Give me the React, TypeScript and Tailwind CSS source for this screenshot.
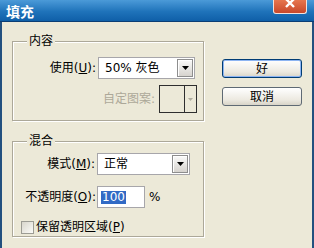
import React from 'react';

const font = "font-['DejaVu_Sans','Noto_Sans_CJK_SC',sans-serif]";

function Arrow() {
  return (
    <div className="w-[16px] h-full flex items-center justify-center border border-[#8e8e8e] bg-[linear-gradient(#fafafa,#d6d3ce)] shadow-[inset_1px_1px_0_#fff]">
      <svg width="7" height="4" viewBox="0 0 7 4">
        <path d="M0 0h7L3.5 4z" fill="#000" />
      </svg>
    </div>
  );
}

function Select({ value, width }: { value: string; width: string }) {
  return (
    <div className={`${width} h-[22px] flex items-center border border-[#a7a6aa] bg-white p-[1px]`}>
      <span className="flex-1 pl-[5px] leading-none">{value}</span>
      <Arrow />
    </div>
  );
}

function Group({ title, className, children }: { title: string; className: string; children: React.ReactNode }) {
  return (
    <div className={`relative border border-[#aca899] shadow-[inset_1px_1px_0_#fff,1px_1px_0_#fff] ${className}`}>
      <span className="absolute top-[-9px] left-[14px] bg-[#ece9d8] px-[2px] leading-[16px]">{title}</span>
      {children}
    </div>
  );
}

export default function App() {
  return (
    <div className={`w-[314px] h-[248px] overflow-hidden flex flex-col bg-[#ece9d8] text-[12px] text-black ${font}`}>
      {/* title bar */}
      <div className="h-[22px] flex items-start pl-[6px] pr-[7px] bg-[linear-gradient(to_bottom,#4b9ad8,#1f73ba_55%,#0f5fa8)] border-b border-[#0b3d74]">
        <span className="mt-[2px] text-white font-bold text-[14px] leading-[18px] font-['Noto_Sans_CJK_SC',sans-serif]">填充</span>
        <div className="ml-auto w-[34px] h-[14px] overflow-hidden rounded-b-[3px] border border-t-0 border-[#f3e2dc] bg-[linear-gradient(#e6764f,#c8482a)] flex justify-center">
          <svg width="12" height="12" viewBox="0 0 12 12" className="mt-[-3px]">
            <path d="M2 2l8 8M10 2l-8 8" stroke="#fff" strokeWidth="2.4" />
          </svg>
        </div>
      </div>

      {/* client area */}
      <div className="flex-1 flex border-x-2 border-[#23507f] pl-[10px] pt-[19px]">
        <div className="w-[192px] flex flex-col gap-[20px]">
          <Group title="内容" className="h-[80px] pt-[15px]">
            <div className="flex items-center">
              <span className="w-[83px] text-right">使用(<u>U</u>):</span>
              <div className="ml-[2px]">
                <Select value="50% 灰色" width="w-[97px]" />
              </div>
            </div>
            <div className="flex items-center justify-end mt-[6px] pr-[6px]">
              <span className="mr-[4px] text-[#aca899]">自定图案:</span>
              <div className="w-[38px] h-[28px] border border-[#2e2e2e] flex">
                <div className="w-[25px] border-r border-[#2e2e2e]" />
                <div className="flex-1 flex items-center justify-center">
                  <svg width="5" height="3" viewBox="0 0 5 3">
                    <path d="M0 0h5L2.5 3z" fill="#b0ada0" />
                  </svg>
                </div>
              </div>
            </div>
          </Group>

          <Group title="混合" className="h-[96px] pt-[11px]">
            <div className="flex items-center">
              <span className="w-[82px] text-right">模式(<u>M</u>):</span>
              <div className="ml-[2px]">
                <Select value="正常" width="w-[93px]" />
              </div>
            </div>
            <div className="flex items-center mt-[11px]">
              <span className="w-[83px] text-right">不透明度(<u>O</u>):</span>
              <div className="ml-[1px] w-[48px] h-[22px] border border-[#a7a6aa] bg-white flex items-center pl-[3px]">
                <span className="bg-[#316ac5] text-white leading-[13px] px-px">100</span>
              </div>
              <span className="ml-[4px]">%</span>
            </div>
            <div className="flex items-center mt-[10px] pl-[8px]">
              <div className="w-[13px] h-[13px] border border-[#9c9c94] bg-[linear-gradient(135deg,#d8d6cc,#fbfbf8)]" />
              <span className="ml-[2px]">保留透明区域(<u>P</u>)</span>
            </div>
          </Group>
        </div>

        <div className="ml-[18px] pt-[18px] flex flex-col gap-[9px]">
          <button className="w-[80px] h-[19px] rounded-[3px] border border-[#003c74] bg-[linear-gradient(#ffffff,#ece9e0_70%,#d8d4c8)] shadow-[inset_0_0_0_1px_#8cb4f2] leading-none">
            好
          </button>
          <button className="w-[80px] h-[19px] rounded-[3px] border border-[#5f6a74] bg-[linear-gradient(#ffffff,#ece9e0_70%,#d8d4c8)] leading-none">
            取消
          </button>
        </div>
      </div>
    </div>
  );
}
